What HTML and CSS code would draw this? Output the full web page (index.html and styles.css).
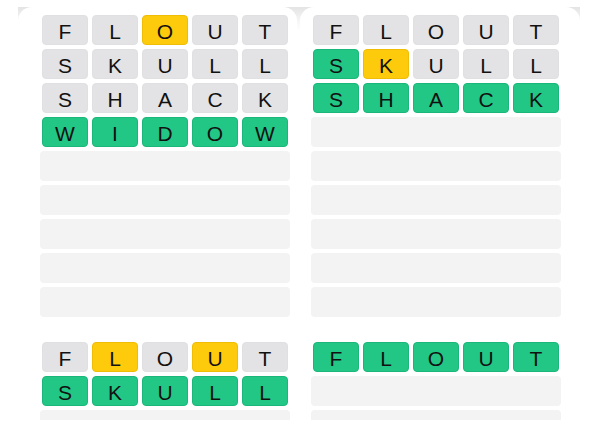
FILE: index.html
```html
<!DOCTYPE html>
<html>
<head>
<meta charset="utf-8">
<link rel="stylesheet" href="styles.css">
</head>
<body>
<div class="page">
  <div class="card left">
    <div class="board">
      <div class="row"><div class="tile g">F</div><div class="tile g">L</div><div class="tile y">O</div><div class="tile g">U</div><div class="tile g">T</div></div>
      <div class="row"><div class="tile g">S</div><div class="tile g">K</div><div class="tile g">U</div><div class="tile g">L</div><div class="tile g">L</div></div>
      <div class="row"><div class="tile g">S</div><div class="tile g">H</div><div class="tile g">A</div><div class="tile g">C</div><div class="tile g">K</div></div>
      <div class="row"><div class="tile c">W</div><div class="tile c">I</div><div class="tile c">D</div><div class="tile c">O</div><div class="tile c">W</div></div>
      <div class="row empty"></div>
      <div class="row empty"></div>
      <div class="row empty"></div>
      <div class="row empty"></div>
      <div class="row empty"></div>
    </div>
  </div>
  <div class="card right">
    <div class="board">
      <div class="row"><div class="tile g">F</div><div class="tile g">L</div><div class="tile g">O</div><div class="tile g">U</div><div class="tile g">T</div></div>
      <div class="row"><div class="tile c">S</div><div class="tile y">K</div><div class="tile g">U</div><div class="tile g">L</div><div class="tile g">L</div></div>
      <div class="row"><div class="tile c">S</div><div class="tile c">H</div><div class="tile c">A</div><div class="tile c">C</div><div class="tile c">K</div></div>
      <div class="row empty"></div>
      <div class="row empty"></div>
      <div class="row empty"></div>
      <div class="row empty"></div>
      <div class="row empty"></div>
      <div class="row empty"></div>
    </div>
  </div>
  <div class="card left lower">
    <div class="board">
      <div class="row"><div class="tile g">F</div><div class="tile y">L</div><div class="tile g">O</div><div class="tile y">U</div><div class="tile g">T</div></div>
      <div class="row"><div class="tile c">S</div><div class="tile c">K</div><div class="tile c">U</div><div class="tile c">L</div><div class="tile c">L</div></div>
      <div class="row empty"></div>
      <div class="row empty"></div>
    </div>
  </div>
  <div class="card right lower">
    <div class="board">
      <div class="row"><div class="tile c">F</div><div class="tile c">L</div><div class="tile c">O</div><div class="tile c">U</div><div class="tile c">T</div></div>
      <div class="row empty"></div>
      <div class="row empty"></div>
      <div class="row empty"></div>
    </div>
  </div>
</div>
</body>
</html>
```
FILE: styles.css
```css
html, body {
  margin: 0;
  padding: 0;
  background: #ffffff;
  overflow: hidden;
}

.page {
  margin: 7px 0 0 18px;
  width: 562px;
  height: 413px;
  overflow: hidden;
  background: linear-gradient(#e4e4e4, #f6f6f6 14px, #ffffff 24px) no-repeat;
  display: grid;
  grid-template-columns: 279px 280px;
  column-gap: 3px;
  align-content: start;
  font-family: "Liberation Sans", Arial, sans-serif;
}

.card {
  background: #ffffff;
  border-radius: 14px 14px 0 0;
  padding-top: 8px;
}

.card.left {
  padding-left: 22px;
}

.card.right {
  padding-left: 11px;
}

.card.lower {
  border-radius: 0;
  padding-top: 25px;
}

.board {
  width: 250px;
  display: flex;
  flex-direction: column;
  gap: 4px;
}

.row {
  height: 30px;
  display: flex;
  gap: 4px;
  padding: 0 2px;
  box-sizing: border-box;
}

.row.empty {
  background: #f3f3f4;
  border-radius: 4px;
}

.tile {
  flex: 0 0 46px;
  box-sizing: border-box;
  border-radius: 4px;
  display: flex;
  align-items: center;
  justify-content: center;
  padding-top: 2px;
  font-size: 21px;
  color: #111111;
  line-height: 1;
}

.tile.g {
  background: #e3e3e5;
  border: 1px solid #e0e0e2;
}

.tile.y {
  background: #fdcb0b;
  border: 1px solid #efbd06;
}

.tile.c {
  background: #22c786;
  border: 1px solid #1bb679;
}
```
